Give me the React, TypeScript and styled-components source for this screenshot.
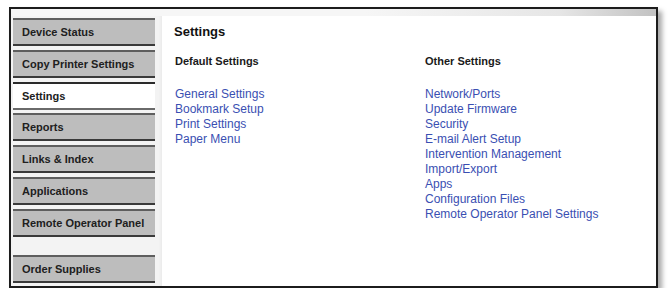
import React from "react";
import styled, { createGlobalStyle } from "styled-components";

const GlobalStyle = createGlobalStyle`
  body {
    margin: 0;
    background: #ffffff;
    font-family: "Liberation Sans", Arial, sans-serif;
  }
`;

const navItems = [
  "Device Status",
  "Copy Printer Settings",
  "Settings",
  "Reports",
  "Links & Index",
  "Applications",
  "Remote Operator Panel",
];

const defaultLinks = ["General Settings", "Bookmark Setup", "Print Settings", "Paper Menu"];

const otherLinks = [
  "Network/Ports",
  "Update Firmware",
  "Security",
  "E-mail Alert Setup",
  "Intervention Management",
  "Import/Export",
  "Apps",
  "Configuration Files",
  "Remote Operator Panel Settings",
];

const App = () => {
  return (
    <>
      <GlobalStyle />
      <Frame>
        <TopStrip />
        <Body>
          <Sidebar>
            <NavList>
              {navItems.map((item) => (
                <NavItem key={item} $active={item === "Settings"}>
                  {item}
                </NavItem>
              ))}
            </NavList>
            <NavItem $active={false}>Order Supplies</NavItem>
          </Sidebar>
          <Content>
            <Heading>Settings</Heading>
            <Columns>
              <Column>
                <SubHeading>Default Settings</SubHeading>
                {defaultLinks.map((link) => (
                  <LinkItem key={link} href="#">
                    {link}
                  </LinkItem>
                ))}
              </Column>
              <Column>
                <SubHeading>Other Settings</SubHeading>
                {otherLinks.map((link) => (
                  <LinkItem key={link} href="#">
                    {link}
                  </LinkItem>
                ))}
              </Column>
            </Columns>
          </Content>
        </Body>
      </Frame>
    </>
  );
};

const Frame = styled.div`
  margin: 7px 0 0 9px;
  width: 645px;
  height: 277px;
  border: 2px solid #1c1c1c;
  display: flex;
  flex-direction: column;
  background: #ffffff;
  box-shadow: 4px 4px 5px rgba(0, 0, 0, 0.35);
`;

const TopStrip = styled.div`
  height: 7px;
  background: linear-gradient(to right, #f6f6f6 55%, #e6e6e6 85%, #c2c2c2);
`;

const Body = styled.div`
  flex: 1;
  display: flex;
`;

const Sidebar = styled.nav`
  width: 149px;
  background: #f3f3f3;
  padding: 2px 0 3px 2px;
  display: flex;
  flex-direction: column;
  justify-content: space-between;
  box-shadow: inset -3px 0 3px -2px #e8e8e8;
`;

const NavList = styled.div`
  display: flex;
  flex-direction: column;
  gap: 3.8px;
`;

const NavItem = styled.div<{ $active: boolean }>`
  width: 142px;
  height: 28px;
  box-sizing: border-box;
  display: flex;
  align-items: center;
  padding-left: 9px;
  background: ${(p) => (p.$active ? "#ffffff" : "#bdbdbd")};
  border-top: 2px solid ${(p) => (p.$active ? "#2a2a2a" : "#5e5e5e")};
  border-bottom: 2px solid ${(p) => (p.$active ? "#6a6a6a" : "#3a3a3a")};
  font-size: 11px;
  font-weight: bold;
  color: #202020;
  white-space: nowrap;
`;

const Content = styled.main`
  flex: 1;
  padding: 8px 0 0 12px;
`;

const Heading = styled.h1`
  margin: 0;
  font-size: 13px;
  font-weight: bold;
  color: #111111;
  line-height: 16px;
`;

const Columns = styled.div`
  display: grid;
  grid-template-columns: 250px 1fr;
  margin-top: 14px;
  padding-left: 1px;
`;

const Column = styled.div`
  display: flex;
  flex-direction: column;
`;

const SubHeading = styled.h2`
  margin: 0 0 19px;
  font-size: 11px;
  font-weight: bold;
  color: #1a1a1a;
  line-height: 14px;
`;

const LinkItem = styled.a`
  font-size: 12px;
  line-height: 15px;
  color: #3a4fb2;
  text-decoration: none;
  width: max-content;
`;

export default App;
